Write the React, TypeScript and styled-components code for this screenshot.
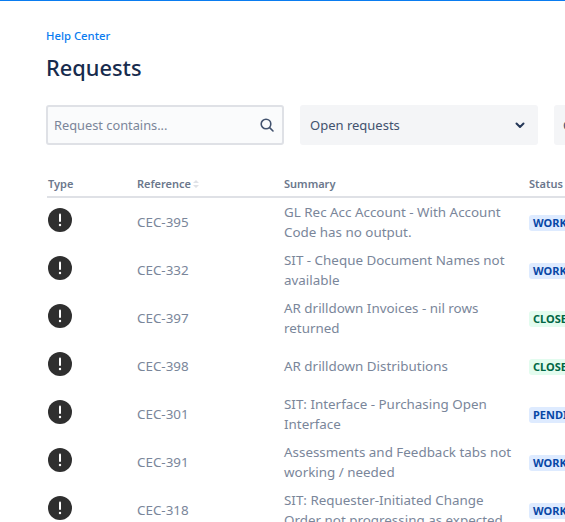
import React from "react";
import styled, { createGlobalStyle } from "styled-components";

const Global = createGlobalStyle`
  html, body { margin: 0; padding: 0; background: #fff; overflow: hidden; width: 565px; height: 522px; }
  #root { width: 565px; height: 522px; overflow: hidden; }
  * { box-sizing: border-box; }
`;

const Page = styled.div`
  width: 565px;
  height: 522px;
  overflow: hidden;
  border-top: 1px solid #0a7cf0;
  padding: 27px 0 0 46px;
  font-family: "Noto Sans", "Liberation Sans", sans-serif;
  color: #172b4d;
  font-size: 13px;
`;

const Crumb = styled.a`
  display: block;
  font-size: 11.3px;
  line-height: 16px;
  color: #0a7cf0;
  font-weight: 500;
`;

const Title = styled.h1`
  margin: 6px 0 0;
  font-size: 21.8px;
  line-height: 36px;
  font-weight: 500;
  color: #172b4d;
`;

const Filters = styled.div`
  display: flex;
  gap: 16px;
  width: 560px;
  margin-top: 19px;
`;

const Search = styled.div`
  flex: 0 0 238px;
  height: 40px;
  display: flex;
  align-items: center;
  justify-content: space-between;
  padding: 0 7px 0 6px;
  border: 2px solid #dfe1e6;
  border-radius: 3px;
  background: #fafbfc;
  color: #7a869a;
  font-size: 12.8px;
`;

const Select = styled.div`
  flex: 0 0 238px;
  height: 40px;
  display: flex;
  align-items: center;
  justify-content: space-between;
  padding: 0 12px 0 10px;
  border-radius: 3px;
  background: #f4f5f7;
  color: #42526e;
  white-space: nowrap;
`;

const CreatorSelect = styled(Select)`
  padding-left: 9px;
`;

const Table = styled.div`
  width: 600px;
  margin: 31px 0 0 1px;
`;

const HeadRow = styled.div`
  display: grid;
  grid-template-columns: 90px 147px 245px 1fr;
  height: 22px;
  border-bottom: 2px solid #dfe1e6;
  font-size: 11px;
  line-height: 16px;
  font-weight: 600;
  color: #6b778c;
`;

const HeadCell = styled.div`
  display: flex;
  align-items: center;
  height: 16px;
  gap: 2px;
`;

const TypeHead = styled(HeadCell)`
  padding-left: 1px;
`;

const Row = styled.div`
  display: grid;
  grid-template-columns: 90px 147px 245px 1fr;
  height: 48px;
  align-items: center;
  color: #7a869a;
  font-size: 13.4px;
  line-height: 20px;
`;

const TypeIcon = styled.svg`
  width: 24px;
  height: 24px;
  display: block;
  margin: -4px 0 0 1px;
`;

const Summary = styled.div`
  width: 230px;
`;

const Lozenge = styled.span<{ $tone: "blue" | "green" }>`
  display: inline-block;
  padding: 0 4px;
  border-radius: 3px;
  font-size: 11px;
  line-height: 16px;
  font-weight: 700;
  white-space: nowrap;
  background: ${(p) => (p.$tone === "blue" ? "#deebff" : "#e3fcef")};
  color: ${(p) => (p.$tone === "blue" ? "#0747a6" : "#006644")};
`;

const rows: { ref: string; text: string; status: string; tone: "blue" | "green" }[] = [
  { ref: "CEC-395", text: "GL Rec Acc Account - With Account Code has no output.", status: "WORK IN PROGRESS", tone: "blue" },
  { ref: "CEC-332", text: "SIT - Cheque Document Names not available", status: "WORK IN PROGRESS", tone: "blue" },
  { ref: "CEC-397", text: "AR drilldown Invoices - nil rows returned", status: "CLOSED", tone: "green" },
  { ref: "CEC-398", text: "AR drilldown Distributions", status: "CLOSED", tone: "green" },
  { ref: "CEC-301", text: "SIT: Interface - Purchasing Open Interface", status: "PENDING", tone: "blue" },
  { ref: "CEC-391", text: "Assessments and Feedback tabs not working / needed", status: "WORK IN PROGRESS", tone: "blue" },
  { ref: "CEC-318", text: "SIT: Requester-Initiated Change Order not progressing as expected", status: "WORK IN PROGRESS", tone: "blue" },
];

const Alert = () => (
  <TypeIcon viewBox="0 0 24 24">
    <circle cx="12" cy="12" r="12" fill="#2f2f2f" />
    <rect x="11" y="5.5" width="2" height="8.5" rx="1" fill="#fff" />
    <circle cx="12" cy="17" r="1.2" fill="#fff" />
  </TypeIcon>
);

export default function App() {
  return (
    <Page>
      <Global />
      <Crumb>Help Center</Crumb>
      <Title>Requests</Title>
      <Filters>
        <Search>
          <span>Request contains...</span>
          <svg width="16" height="16" viewBox="0 0 16 16" fill="none" stroke="#42526e" strokeWidth="1.6" strokeLinecap="round">
            <circle cx="7" cy="7" r="4.8" />
            <path d="M10.6 10.6 L14 14" />
          </svg>
        </Search>
        <Select>
          <span>Open requests</span>
          <svg width="12" height="12" viewBox="0 0 12 12" fill="none" stroke="#253858" strokeWidth="2" strokeLinecap="round" strokeLinejoin="round">
            <path d="M2.5 4.5 L6 8 L9.5 4.5" />
          </svg>
        </Select>
        <CreatorSelect>
          <span>Created by anyone</span>
        </CreatorSelect>
      </Filters>
      <Table>
        <HeadRow>
          <TypeHead>Type</TypeHead>
          <HeadCell>
            Reference
            <svg width="6" height="8" viewBox="0 0 6 8" fill="#dfe1e6">
              <path d="M3 0 L6 3 H0 Z M3 8 L0 5 H6 Z" />
            </svg>
          </HeadCell>
          <HeadCell>Summary</HeadCell>
          <HeadCell>Status</HeadCell>
        </HeadRow>
        {rows.map((r) => (
          <Row key={r.ref}>
            <Alert />
            <div>{r.ref}</div>
            <Summary>{r.text}</Summary>
            <div>
              <Lozenge $tone={r.tone}>{r.status}</Lozenge>
            </div>
          </Row>
        ))}
      </Table>
    </Page>
  );
}
